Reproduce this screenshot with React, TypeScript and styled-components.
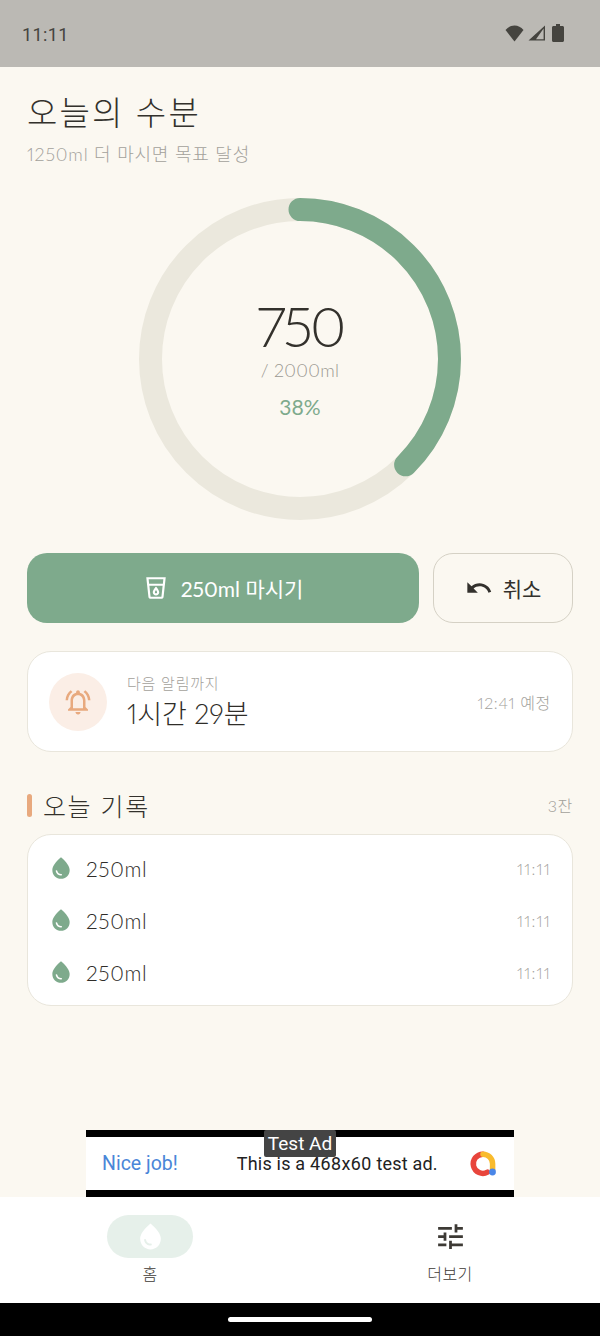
import React from "react";
import styled, { createGlobalStyle } from "styled-components";

const Global = createGlobalStyle`
  html, body { margin: 0; padding: 0; background: #fbf8f1; }
  * { box-sizing: border-box; }
  body { font-family: Lato, "Noto Sans CJK KR", sans-serif; font-weight: 300; font-variant-numeric: proportional-nums; }
`;

const Page = styled.div`
  width: 600px; height: 1336px; display: flex; flex-direction: column;
  background: #fbf8f1; overflow: hidden; color: #3d3a35;
`;
const StatusBar = styled.div`
  height: 67px; flex: none; background: #bbb9b4; display: flex; align-items: center;
  justify-content: space-between; padding: 2px 36px 0 22px; color: #45443f;
  font: 400 18px/1 Roboto, sans-serif; letter-spacing: 0.4px;
`;
const StatusIcons = styled.div`display: flex; align-items: center; gap: 4px; margin-top: -3px;`;
const Main = styled.main`flex: 1; display: flex; flex-direction: column; padding: 27px 27px 0;`;
const Title = styled.h1`margin: 0; font-size: 33px; line-height: 36px; font-weight: 300; letter-spacing: 2.2px; color: #33312c;`;
const Sub = styled.p`margin: 13px 0 0; font-size: 18px; line-height: 22px; color: #a3a19b; letter-spacing: 0.8px;`;
const RingWrap = styled.div`
  display: grid; place-items: center; margin-top: 32px; height: 323px;
  & > * { grid-area: 1 / 1; }
`;
const RingCenter = styled.div`display: flex; flex-direction: column; align-items: center; margin-top: -2px;`;
const Amount = styled.div`font-size: 56px; line-height: 60px; font-weight: 300; color: #33312c; letter-spacing: -3px;`;
const Goal = styled.div`font-size: 18px; line-height: 24px; color: #9b9991; letter-spacing: 0.3px; margin-top: 2px;`;
const Percent = styled.div`font-size: 21px; line-height: 26px; color: #7eaa8c; margin-top: 12px; font-weight: 400;`;
const Actions = styled.div`display: flex; gap: 14px; margin-top: 33px;`;
const Primary = styled.button`
  flex: 1; height: 70px; border: 0; border-radius: 20px; background: #7eaa8c; color: #fff;
  display: flex; align-items: center; justify-content: center; gap: 12px;
  font: inherit; font-size: 21px; font-weight: 400; padding: 0;
`;
const Secondary = styled.button`
  width: 140px; height: 70px; border: 1px solid #d5d1c5; border-radius: 20px; background: transparent;
  color: #33312c; display: flex; align-items: center; justify-content: center; gap: 10px;
  font: inherit; font-size: 21px; font-weight: 400; padding: 0;
`;
const Card = styled.section`
  background: #fff; border: 1px solid #e9e6dc; border-radius: 24px;
`;
const AlarmCard = styled(Card)`
  margin-top: 28px; height: 101px; display: flex; align-items: center; padding: 0 21px; gap: 20px;
`;
const AlarmIcon = styled.div`
  width: 58px; height: 58px; border-radius: 50%; background: #fbeee6; display: flex;
  align-items: center; justify-content: center;
`;
const AlarmText = styled.div`flex: 1; display: flex; flex-direction: column; gap: 4px;`;
const AlarmLabel = styled.div`font-size: 15px; line-height: 20px; color: #a3a19b; letter-spacing: 0.8px;`;
const AlarmValue = styled.div`font-size: 27px; line-height: 34px; color: #2f2d29;`;
const Muted = styled.div`font-size: 16px; color: #a3a19b; letter-spacing: 0.7px;`;
const LogTime = styled(Muted)`letter-spacing: 1.2px;`;
const SectionHead = styled.div`display: flex; align-items: center; margin-top: 35px; height: 36px;`;
const Accent = styled.span`width: 5px; height: 23px; border-radius: 3px; background: #e8a97e; margin-right: 11px;`;
const SectionTitle = styled.h2`flex: 1; margin: 0; font-size: 25px; font-weight: 300; letter-spacing: 1.6px; color: #33312c;`;
const LogCard = styled(Card)`margin-top: 11px; padding: 7px 21px; display: flex; flex-direction: column;`;
const LogRow = styled.div`height: 52px; display: flex; align-items: center; gap: 12px; margin-left: -1px;`;
const LogAmount = styled.div`flex: 1; font-size: 21px; letter-spacing: 0.6px; color: #2f2d29;`;
const AdSlot = styled.div`
  position: relative; flex: none; width: 428px; height: 67px; margin: 0 auto; background: #000;
  padding: 7px 0;
`;
const AdInner = styled.div`
  height: 100%; background: #fff; display: flex; align-items: center;
  padding: 0 16px; font-family: Roboto, sans-serif; font-weight: 400;
`;
const AdHead = styled.span`color: #4a86d8; font-size: 19.5px; font-weight: 400;`;
const AdText = styled.span`color: #222; font-size: 18px; letter-spacing: 0.2px; margin: 0 auto 0 59px;`;
const AdTag = styled.div`
  position: absolute; left: 178px; top: 0; width: 72px; height: 27px; background: #444; color: #fff;
  border-radius: 2px; font: 400 19px/27px Roboto, sans-serif; text-align: center;
`;
const Nav = styled.nav`
  flex: none; height: 106px; background: #fff; display: grid; grid-template-columns: 1fr 1fr;
  padding-top: 18px;
`;
const NavItem = styled.div`display: flex; flex-direction: column; align-items: center; gap: 6px;`;
const NavPill = styled.div<{ $active?: boolean }>`
  width: 86px; height: 43px; border-radius: 22px; display: flex; align-items: center; justify-content: center;
  background: ${p => (p.$active ? "#e6f0ea" : "transparent")};
`;
const NavLabel = styled.div`font-size: 16px; line-height: 20px; color: #3d3a35; font-weight: 300; letter-spacing: 0.4px;`;
const SystemBar = styled.div`flex: none; height: 33px; background: #000; display: flex; align-items: flex-start; justify-content: center; padding-top: 14px;`;
const HomeHandle = styled.div`width: 144px; height: 5px; border-radius: 3px; background: #fff;`;

const Mi = ({ d, size, color }: { d: string; size: number; color: string }) => (
  <svg width={size} height={size} viewBox="0 0 24 24" fill={color}><path d={d} /></svg>
);
const DROP = "M12 2c-5.33 4.55-8 8.48-8 11.8 0 4.98 3.8 8.2 8 8.2s8-3.22 8-8.2c0-3.32-2.67-7.25-8-11.8zM7.83 14c.37 0 .67.26.74.62.41 2.22 2.28 2.98 3.64 2.87.43-.02.79.32.79.75 0 .4-.32.73-.72.75-2.13.13-4.62-1.09-5.19-4.12-.08-.45.28-.87.74-.87z";
const CUP = "M3 2l2.01 18.23C5.13 21.23 5.97 22 7 22h10c1.03 0 1.87-.77 1.99-1.77L21 2H3zm14 18l-10 .01L5.89 10H18.1L17 20zm1.33-12H5.67l-.44-4h13.53l-.43 4zM12 19c1.66 0 3-1.34 3-3 0-2-3-5.4-3-5.4S9 14 9 16c0 1.66 1.34 3 3 3zm0-5.09c.59.91 1 1.73 1 2.09 0 .55-.45 1-1 1s-1-.45-1-1c0-.36.41-1.18 1-2.09z";
const UNDO = "M12.5 8c-2.65 0-5.05.99-6.9 2.6L2 7v9h9l-3.62-3.62c1.39-1.16 3.16-1.88 5.12-1.88 3.54 0 6.55 2.31 7.6 5.5l2.37-.78C21.08 11.03 17.15 8 12.5 8z";
const BELL = "M7.58 4.08L6.15 2.65C3.75 4.48 2.17 7.3 2.03 10.5h2c.15-2.65 1.51-4.97 3.55-6.42zm12.39 6.42h2c-.15-3.2-1.73-6.02-4.12-7.85l-1.42 1.43c2.02 1.45 3.39 3.77 3.54 6.42zM18 11c0-3.07-1.64-5.64-4.5-6.32V4c0-.83-.67-1.5-1.5-1.5s-1.5.67-1.5 1.5v.68C7.63 5.36 6 7.92 6 11v5l-2 2v1h16v-1l-2-2v-5zm-2 6H8v-6c0-2.48 1.51-4.5 4-4.5s4 2.02 4 4.5v6zm-4 5c.14 0 .27-.01.4-.04.65-.14 1.18-.58 1.44-1.18.1-.24.15-.5.15-.78h-4c.01 1.1.9 2 2.01 2z";
const TUNE = "M3 17v2h6v-2H3zM3 5v2h10V5H3zm10 16v-2h8v-2h-8v-2h-2v6h2zM7 9v2H3v2h4v2h2V9H7zm14 4v-2H11v2h10zm-6-4h2V7h4V5h-4V3h-2v6z";

const Ring = () => {
  const r = 149.5;
  const c = 2 * Math.PI * r;
  return (
    <svg width="322" height="322" viewBox="0 0 322 322">
      <circle cx="161" cy="161" r={r} fill="none" stroke="#ebe8dd" strokeWidth="23" />
      <circle cx="161" cy="161" r={r} fill="none" stroke="#7eaa8c" strokeWidth="23" strokeLinecap="round"
        strokeDasharray={`${c * 0.375} ${c}`} transform="rotate(-90 161 161)" />
    </svg>
  );
};

const AdLogo = () => (
  <svg width="30" height="30" viewBox="0 0 30 30">
    <path d="M19.5 23.2A9.6 9.6 0 1 1 15 5.2" fill="none" stroke="#e8453c" strokeWidth="5.5" strokeLinecap="round" />
    <path d="M15 5.2a9.6 9.6 0 0 1 9.6 9.6v6" fill="none" stroke="#f9bb2d" strokeWidth="5.5" strokeLinecap="round" />
    <circle cx="24.5" cy="23" r="3.4" fill="#4a86e8" />
  </svg>
);

export default function App() {
  return (
    <Page>
      <Global />
      <StatusBar>
        <span>11:11</span>
        <StatusIcons>
          <svg width="19" height="17" viewBox="0 0 19 17" fill="#45443f"><path d="M9.5 16.5L0.5 5C3 2.2 6 .6 9.5.6S16 2.2 18.5 5z" /></svg>
          <svg width="18" height="16" viewBox="0 0 18 16"><path fillRule="evenodd" fill="#45443f" d="M17 .5V15.5H.5zM15.6 3.6L8 14.2h7.6z" /><path fill="#45443f" d="M3 14.2L8 9.5v4.7z" /></svg>
          <svg width="12" height="18" viewBox="0 0 12 18" style={{ marginLeft: 2 }} fill="#45443f"><path d="M4 0h4v2h2.5c.8 0 1.5.7 1.5 1.5V16.5c0 .8-.7 1.5-1.5 1.5h-9C.7 18 0 17.3 0 16.5V3.5C0 2.7.7 2 1.5 2H4z" /></svg>
        </StatusIcons>
      </StatusBar>
      <Main>
        <Title>오늘의 수분</Title>
        <Sub>1250ml 더 마시면 목표 달성</Sub>
        <RingWrap>
          <Ring />
          <RingCenter>
            <Amount>750</Amount>
            <Goal>/ 2000ml</Goal>
            <Percent>38%</Percent>
          </RingCenter>
        </RingWrap>
        <Actions>
          <Primary><Mi d={CUP} size={26} color="#fff" />250ml 마시기</Primary>
          <Secondary><Mi d={UNDO} size={28} color="#33312d" />취소</Secondary>
        </Actions>
        <AlarmCard>
          <AlarmIcon><Mi d={BELL} size={30} color="#e8a97e" /></AlarmIcon>
          <AlarmText>
            <AlarmLabel>다음 알림까지</AlarmLabel>
            <AlarmValue>1시간 29분</AlarmValue>
          </AlarmText>
          <Muted>12:41 예정</Muted>
        </AlarmCard>
        <SectionHead>
          <Accent />
          <SectionTitle>오늘 기록</SectionTitle>
          <Muted>3잔</Muted>
        </SectionHead>
        <LogCard>
          {[0, 1, 2].map(i => (
            <LogRow key={i}>
              <Mi d={DROP} size={26} color="#7eaa8c" />
              <LogAmount>250ml</LogAmount>
              <LogTime>11:11</LogTime>
            </LogRow>
          ))}
        </LogCard>
      </Main>
      <AdSlot>
        <AdInner>
          <AdHead>Nice job!</AdHead>
          <AdText>This is a 468x60 test ad.</AdText>
          <AdLogo />
        </AdInner>
        <AdTag>Test Ad</AdTag>
      </AdSlot>
      <Nav>
        <NavItem>
          <NavPill $active><Mi d={DROP} size={31} color="#fff" /></NavPill>
          <NavLabel>홈</NavLabel>
        </NavItem>
        <NavItem>
          <NavPill><Mi d={TUNE} size={33} color="#3d3a35" /></NavPill>
          <NavLabel>더보기</NavLabel>
        </NavItem>
      </Nav>
      <SystemBar><HomeHandle /></SystemBar>
    </Page>
  );
}
